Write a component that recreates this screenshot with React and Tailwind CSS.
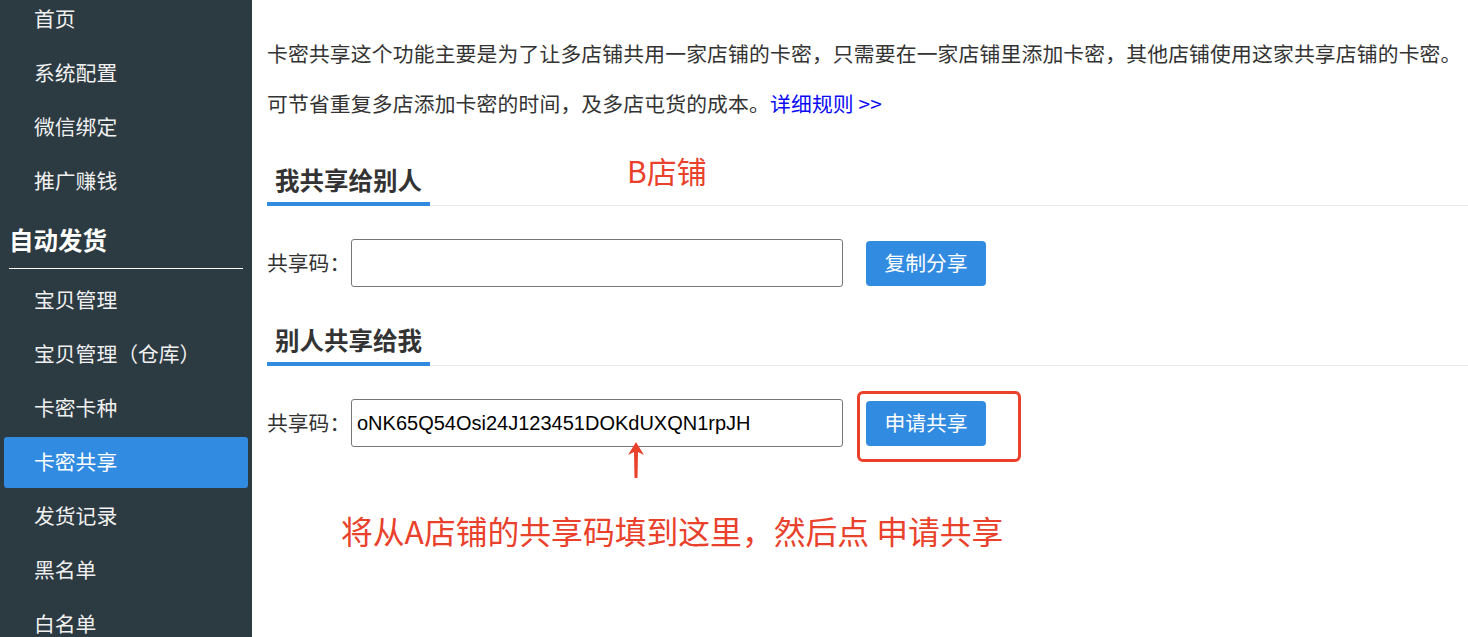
import React from "react";

const cjk = { fontFamily: '"Noto Sans CJK SC", "Noto Sans", sans-serif' };

function NavItem({ label, active }) {
  return (
    <div className="py-[1.5px] px-[4px]">
      <div
        className={
          "h-[51px] flex items-center pl-[30px] rounded-[3px] text-[20.8px] " +
          (active ? "bg-[#318be0] text-white" : "text-[#f0f0f0]")
        }
      >
        {label}
      </div>
    </div>
  );
}

function SectionTitle({ children }) {
  return (
    <div className="border-b border-[#e8e8e8] flex">
      <div className="px-[8px] pb-[6px] -mb-px border-b-4 border-[#318be0] text-[24.5px] leading-[32px] font-bold text-[#333]">
        {children}
      </div>
    </div>
  );
}

function ShareRow({ value, button, boxed }) {
  return (
    <div className="flex items-center">
      <span className="w-[84px] text-[20.8px] text-[#333]">共享码：</span>
      <div className="w-[492px] h-[48px] border border-[#767676] rounded-[3px] flex items-center px-[5px]">
        <span
          className="text-[20px] text-black"
          style={{ fontFamily: '"Liberation Sans", Arial, sans-serif' }}
        >
          {value}
        </span>
      </div>
      <div className="relative ml-[23px]">
        <button className="w-[120px] h-[45px] bg-[#318be0] rounded-[4px] text-white text-[20.8px] flex items-center justify-center">
          {button}
        </button>
        {boxed && (
          <div className="absolute left-[-9px] top-[-10px] w-[164px] h-[71px] border-[3px] border-[#e9412b] rounded-[6px]" />
        )}
      </div>
    </div>
  );
}

export default function App() {
  return (
    <div className="flex w-[1468px] h-[637px] overflow-hidden bg-white" style={cjk}>
      <aside className="w-[252px] shrink-0 bg-[#2c3a42] overflow-hidden">
        <div className="mt-[-8px]">
          <NavItem label="首页" />
          <NavItem label="系统配置" />
          <NavItem label="微信绑定" />
          <NavItem label="推广赚钱" />
          <div className="mx-[9px] pt-[16px] pb-[12px] border-b border-white text-[24.5px] leading-[32px] font-bold text-white">
            自动发货
          </div>
          <div className="h-[4px]" />
          <NavItem label="宝贝管理" />
          <NavItem label="宝贝管理（仓库）" />
          <NavItem label="卡密卡种" />
          <NavItem label="卡密共享" active />
          <NavItem label="发货记录" />
          <NavItem label="黑名单" />
          <NavItem label="白名单" />
        </div>
      </aside>
      <main className="relative flex-1 pl-[15px] pt-[28px]">
        <p className="text-[20.8px] leading-[50px] tracking-[0.16px] text-[#333] whitespace-nowrap">
          卡密共享这个功能主要是为了让多店铺共用一家店铺的卡密，只需要在一家店铺里添加卡密，其他店铺使用这家共享店铺的卡密。
        </p>
        <p className="text-[20.8px] leading-[50px] tracking-[0.16px] text-[#333] whitespace-nowrap">
          可节省重复多店添加卡密的时间，及多店屯货的成本。
          <span className="text-[#0a0af5]">详细规则 &gt;&gt;</span>
        </p>

        <div className="mt-[36px]">
          <SectionTitle>我共享给别人</SectionTitle>
        </div>
        <div className="mt-[33px]">
          <ShareRow value="" button="复制分享" />
        </div>

        <div className="mt-[37px]">
          <SectionTitle>别人共享给我</SectionTitle>
        </div>
        <div className="mt-[33px]">
          <ShareRow value="oNK65Q54Osi24J123451DOKdUXQN1rpJH" button="申请共享" boxed />
        </div>

        <p className="mt-[63px] ml-[74px] text-[31.8px] leading-[40px] text-[#e9412b] whitespace-nowrap">
          将从A店铺的共享码填到这里，然后点 申请共享
        </p>

        <div className="absolute left-[375px] top-[150px] text-[30px] leading-[40px] text-[#e9412b] whitespace-nowrap">
          B店铺
        </div>

        <svg
          className="absolute left-[375px] top-[441px]"
          width="18"
          height="38"
          viewBox="0 0 18 38"
        >
          <path d="M9 1 L17 14 L11 11 L10.5 37 L7.5 37 L7 11 L1 14 Z" fill="#e9412b" />
        </svg>
      </main>
    </div>
  );
}
